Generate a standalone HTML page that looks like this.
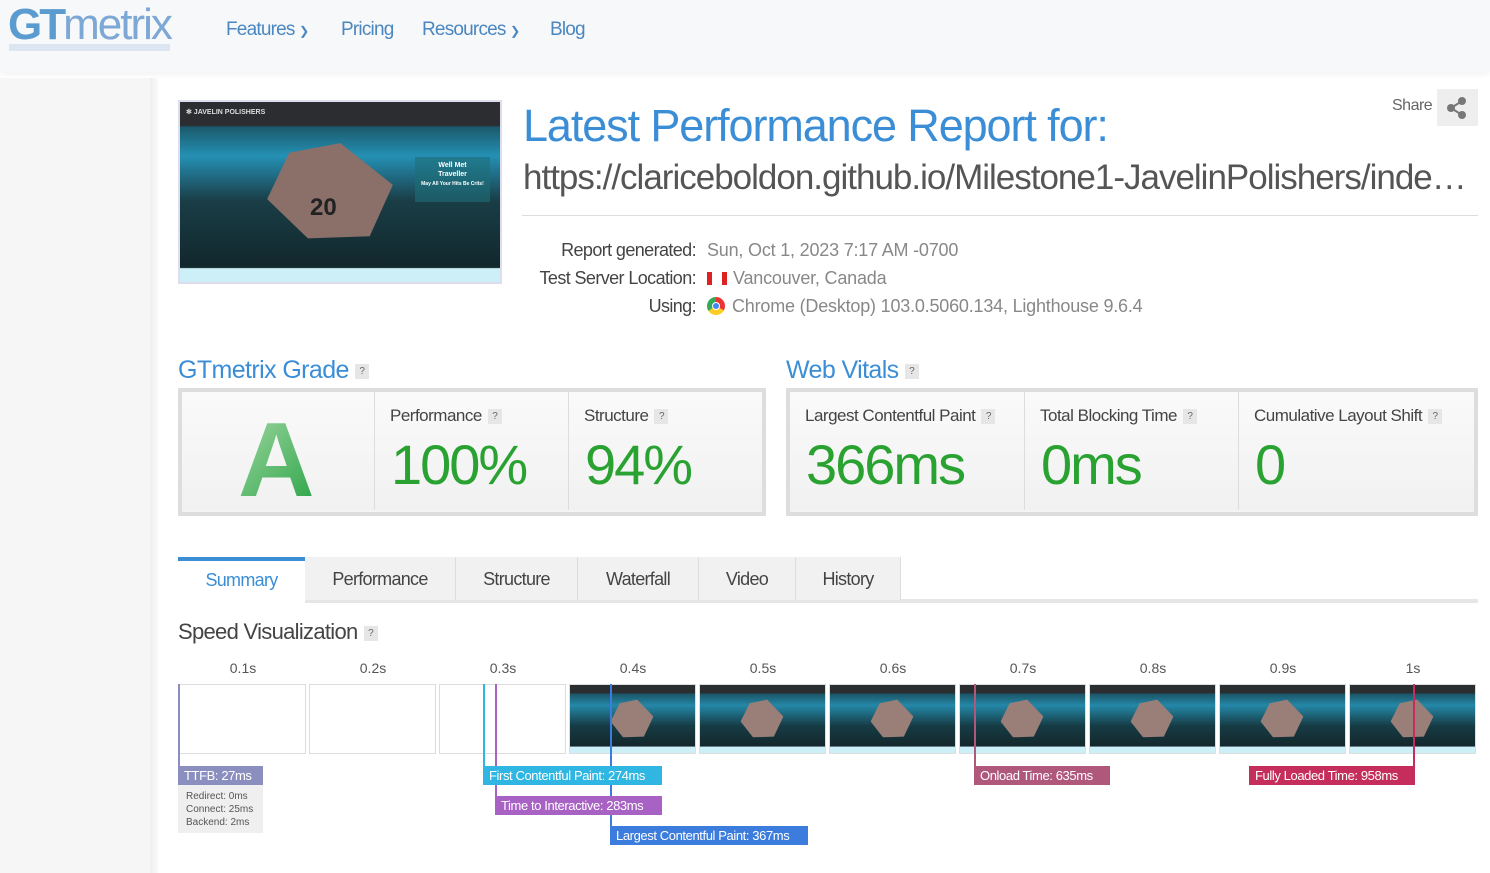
<!DOCTYPE html>
<html><head><meta charset="utf-8"><style>
*{box-sizing:border-box;margin:0;padding:0}
body{width:1490px;height:873px;overflow:hidden;background:#fff;font-family:"Liberation Sans",sans-serif;color:#444;position:relative}
.a{position:absolute;white-space:nowrap}
.hdr{position:absolute;left:0;top:0;width:1490px;height:72px;background:#f7f8f9;box-shadow:0 2px 6px rgba(0,0,0,.06)}
.side{position:absolute;left:0;top:78px;width:150px;height:795px;background:#f6f6f6}
.sh{position:absolute;left:150px;top:78px;width:8px;height:795px;background:linear-gradient(90deg,#eee,#fafafa)}
.nav{color:#4a86c0;font-size:19px;letter-spacing:-.8px;top:19px}
.q{display:inline-block;width:14px;height:15px;background:#e6e6e6;color:#666;font-size:10px;text-align:center;line-height:15px;vertical-align:middle;margin-left:6px}
.box{position:absolute;border:4px solid #ddd;background:#f4f4f4}
.cell{position:absolute;top:0;height:118px;border-left:1px solid #ddd;background:linear-gradient(#fafafa,#f1f1f1)}
.lbl{position:absolute;top:14px;left:15px;font-size:17px;letter-spacing:-.5px;color:#444}
.big{position:absolute;top:40px;left:16px;font-size:56px;letter-spacing:-2px;color:#2aa232}
.tab{position:absolute;top:557px;height:43px;background:#f1f1f1;font-size:18px;letter-spacing:-.7px;color:#444;text-align:center;line-height:44px;border-right:1px solid #ddd}
.fr{position:absolute;top:684px;width:127px;height:70px;border:1px solid #ddd;background:#fff}
.ss{background:linear-gradient(180deg,#2b2e31 0,#2b2e31 12%,#1b5566 13%,#2488a8 30%,#163c45 60%,#14272c 90%,#cdeff7 91%)}
.ss i{position:absolute;left:42px;top:14px;width:40px;height:40px;background:#9a7f78;transform:rotate(15deg);clip-path:polygon(50% 0,100% 30%,90% 85%,40% 100%,0 70%,10% 20%)}
.tl{position:absolute;top:660px;font-size:14px;color:#555;width:130px;text-align:center}
.mk{position:absolute;width:2px}
.mb{position:absolute;height:19px;color:#fff;font-size:13px;letter-spacing:-.4px;line-height:19px;padding-left:6px;z-index:2}
</style></head><body>
<div class="hdr"></div>
<div class="a" style="left:8px;top:0px;font-size:44px;font-weight:bold;letter-spacing:-3px;color:#5a9bd0">GT<span style="color:#7da7d4;font-weight:normal;letter-spacing:-2px">metrix</span></div>
<div class="a" style="left:9px;top:44px;width:161px;height:7px;background:#dce6f2"></div>
<div class="a nav" style="left:226px">Features <span style="font-size:12px">&#10095;</span></div>
<div class="a nav" style="left:341px">Pricing</div>
<div class="a nav" style="left:422px">Resources <span style="font-size:12px">&#10095;</span></div>
<div class="a nav" style="left:550px">Blog</div>
<div class="side"></div><div class="sh"></div>

<div class="a" style="left:178px;top:100px;width:324px;height:184px;border:2px solid #dde;background:linear-gradient(180deg,#2b2d30 0,#2b2d30 13%,#1b5a6c 14%,#2490b4 30%,#1a3d46 55%,#11272c 92%,#cdeff7 92.5%)">
<div class="a" style="left:6px;top:6px;font-size:7px;color:#ddd;font-weight:bold">&#10043; JAVELIN POLISHERS</div>
<div class="a" style="left:90px;top:40px;width:120px;height:100px;background:#8a7068;transform:rotate(12deg);clip-path:polygon(50% 0,100% 30%,90% 85%,40% 100%,0 70%,10% 20%)"></div>
<div class="a" style="left:130px;top:92px;font-size:24px;font-weight:bold;color:#222">20</div>
<div class="a" style="left:235px;top:55px;width:75px;height:45px;background:rgba(30,110,120,.6);color:#fff;font-size:7px;font-weight:bold;text-align:center;padding-top:4px;line-height:9px">Well Met<br>Traveller<br><span style="font-size:5px">May All Your Hits Be Crits!</span></div>
</div>

<div class="a" style="left:523px;top:100px;font-size:45px;letter-spacing:-1.1px;color:#3b8ed6">Latest Performance Report for:</div>
<div class="a" style="left:523px;top:158px;font-size:35px;letter-spacing:-1px;color:#555">https://clariceboldon.github.io/Milestone1-JavelinPolishers/inde…</div>
<div class="a" style="left:1392px;top:97px;font-size:16px;color:#666;letter-spacing:-.5px">Share</div>
<div class="a" style="left:1437px;top:89px;width:41px;height:37px;background:#eee"><svg width="41" height="37"><g fill="#777" stroke="#777" stroke-width="2"><circle cx="25" cy="12" r="3"/><circle cx="14" cy="19" r="3"/><circle cx="25" cy="26" r="3"/><path d="M25 12L14 19L25 26" fill="none"/></g></svg></div>
<div class="a" style="left:522px;top:215px;width:956px;height:1px;background:#ddd"></div>
<div class="a" style="left:430px;top:236px;width:266px;text-align:right;font-size:18px;line-height:28px;letter-spacing:-.6px;color:#444">Report generated:<br>Test Server Location:<br>Using:</div>
<div class="a" style="left:707px;top:236px;font-size:18px;line-height:28px;letter-spacing:-.2px;color:#888">Sun, Oct 1, 2023 7:17 AM -0700<br><span style="display:inline-block;width:20px;height:13px;background:linear-gradient(90deg,#d22 25%,#fff 25%,#fff 75%,#d22 75%);vertical-align:-1px;margin-right:6px"></span>Vancouver, Canada<br><span style="display:inline-block;width:18px;height:18px;border-radius:50%;background:conic-gradient(#e33 0 33%,#fc2 0 66%,#3a5 0);vertical-align:-3px;margin-right:7px;position:relative"><span style="position:absolute;left:5px;top:5px;width:8px;height:8px;border-radius:50%;background:#4285f4;border:1px solid #fff"></span></span>Chrome (Desktop) 103.0.5060.134, Lighthouse 9.6.4</div>

<div class="a" style="left:178px;top:356px;font-size:25px;letter-spacing:-.6px;color:#3b8ed6">GTmetrix Grade<span class="q">?</span></div>
<div class="a" style="left:786px;top:356px;font-size:25px;letter-spacing:-.6px;color:#3b8ed6">Web Vitals<span class="q">?</span></div>

<div class="box" style="left:178px;top:388px;width:588px;height:128px">
<div class="cell" style="left:0;width:192px;border-left:0"><div class="a" style="left:56px;top:8px;font-size:106px;font-weight:bold;color:#3daa50;background:linear-gradient(135deg,#a8dba8,#22a040);-webkit-background-clip:text;-webkit-text-fill-color:transparent">A</div></div>
<div class="cell" style="left:192px;width:194px"><div class="lbl">Performance<span class="q">?</span></div><div class="big">100%</div></div>
<div class="cell" style="left:386px;width:194px"><div class="lbl">Structure<span class="q">?</span></div><div class="big">94%</div></div>
</div>
<div class="box" style="left:786px;top:388px;width:692px;height:128px">
<div class="cell" style="left:0;width:234px;border-left:0"><div class="lbl">Largest Contentful Paint<span class="q">?</span></div><div class="big">366ms</div></div>
<div class="cell" style="left:234px;width:214px"><div class="lbl">Total Blocking Time<span class="q">?</span></div><div class="big">0ms</div></div>
<div class="cell" style="left:448px;width:236px"><div class="lbl">Cumulative Layout Shift<span class="q">?</span></div><div class="big">0</div></div>
</div>

<div class="a" style="left:178px;top:599px;width:1300px;height:4px;background:#e6e6e6"></div>
<div class="tab" style="left:178px;width:127px;background:#fff;color:#3b8ed6;border-top:4px solid #3b8ed6;line-height:38px;height:46px;border-right:0">Summary</div>
<div class="tab" style="left:305px;width:151px">Performance</div>
<div class="tab" style="left:456px;width:122px">Structure</div>
<div class="tab" style="left:578px;width:121px">Waterfall</div>
<div class="tab" style="left:699px;width:97px">Video</div>
<div class="tab" style="left:796px;width:105px">History</div>

<div class="a" style="left:178px;top:619px;font-size:22px;letter-spacing:-.7px;color:#444">Speed Visualization<span class="q">?</span></div>

<div class="tl" style="left:178px">0.1s</div><div class="tl" style="left:308px">0.2s</div><div class="tl" style="left:438px">0.3s</div><div class="tl" style="left:568px">0.4s</div><div class="tl" style="left:698px">0.5s</div><div class="tl" style="left:828px">0.6s</div><div class="tl" style="left:958px">0.7s</div><div class="tl" style="left:1088px">0.8s</div><div class="tl" style="left:1218px">0.9s</div><div class="tl" style="left:1348px">1s</div>
<div class="fr" style="left:179px"></div><div class="fr" style="left:309px"></div><div class="fr" style="left:439px"></div>
<div class="fr ss" style="left:569px"><i></i></div><div class="fr ss" style="left:699px"><i></i></div><div class="fr ss" style="left:829px"><i></i></div><div class="fr ss" style="left:959px"><i></i></div><div class="fr ss" style="left:1089px"><i></i></div><div class="fr ss" style="left:1219px"><i></i></div><div class="fr ss" style="left:1349px"><i></i></div>

<div class="mk" style="left:178px;top:684px;height:82px;background:#8a8fc0"></div>
<div class="mb" style="left:178px;top:766px;width:85px;background:#8a8fc0">TTFB: 27ms</div>
<div class="a" style="left:178px;top:785px;width:85px;height:48px;background:#efefef;font-size:10px;line-height:13px;color:#555;padding:5px 0 0 8px">Redirect: 0ms<br>Connect: 25ms<br>Backend: 2ms</div>
<div class="mk" style="left:483px;top:684px;height:82px;background:#2fb6e2"></div>
<div class="mb" style="left:483px;top:766px;width:179px;background:#2fb6e2">First Contentful Paint: 274ms</div>
<div class="mk" style="left:495px;top:684px;height:112px;background:#a862c4"></div>
<div class="mb" style="left:495px;top:796px;width:167px;background:#a862c4">Time to Interactive: 283ms</div>
<div class="mk" style="left:610px;top:684px;height:142px;background:#3b7cdc"></div>
<div class="mb" style="left:610px;top:826px;width:198px;background:#3b7cdc">Largest Contentful Paint: 367ms</div>
<div class="mk" style="left:974px;top:684px;height:82px;background:#b0587c"></div>
<div class="mb" style="left:974px;top:766px;width:136px;background:#b0587c">Onload Time: 635ms</div>
<div class="mk" style="left:1413px;top:684px;height:82px;background:#c42d5c"></div>
<div class="mb" style="left:1249px;top:766px;width:166px;background:#c42d5c">Fully Loaded Time: 958ms</div>
</body></html>
